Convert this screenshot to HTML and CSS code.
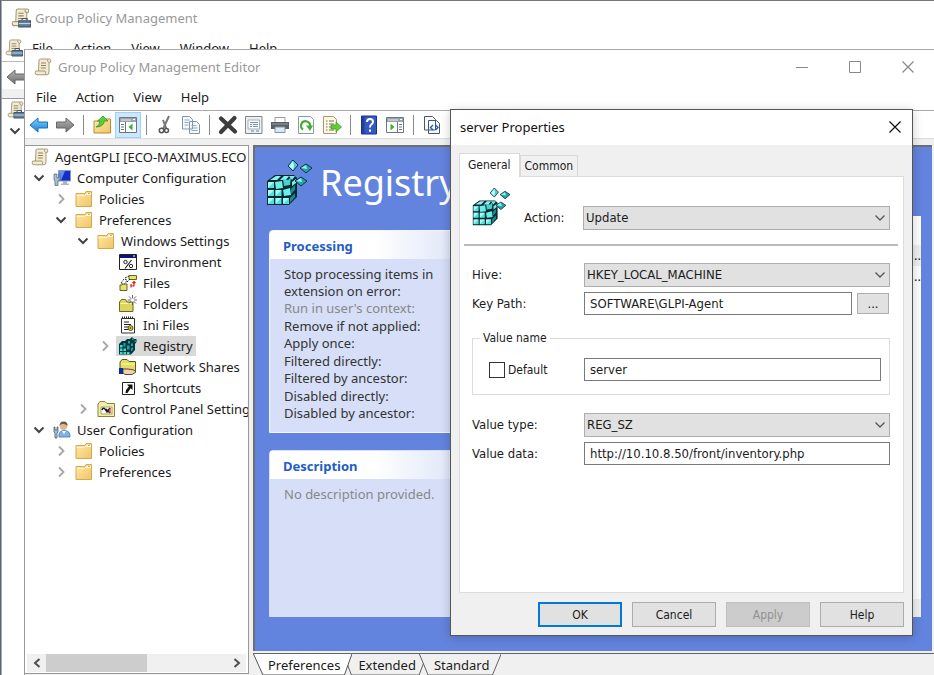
FILE: index.html
```html
<!DOCTYPE html>
<html lang="en">
<head>
<meta charset="utf-8">
<title>Group Policy Management Editor</title>
<link rel="stylesheet" href="styles.css">
</head>
<body>
<svg class="sprite" aria-hidden="true">
  <defs>
    <linearGradient id="g-folder" x1="0" y1="0" x2="1" y2="1"><stop offset="0" stop-color="#ffe9a8"/><stop offset="1" stop-color="#efc567"/></linearGradient>
    <linearGradient id="g-blue" x1="0" y1="0" x2="0" y2="1"><stop offset="0" stop-color="#7fd0fb"/><stop offset="1" stop-color="#1583d8"/></linearGradient>
    <linearGradient id="g-gray" x1="0" y1="0" x2="0" y2="1"><stop offset="0" stop-color="#b5b5b5"/><stop offset="1" stop-color="#6f6f6f"/></linearGradient>
  </defs>
  <symbol id="scroll" viewBox="0 0 18 18">
    <path d="M5 2.200Q5 1 6.500 1H15.500Q17 1 16.800 3T15 4.500V14Q15 16.800 13 16.800H3Q1 16.600 1.200 14.500T3 13H4.500Z" fill="#f3ead0" stroke="#a59a7c"/>
    <path d="M4.500 13H11Q12 14 11.300 16.500M13.500 1.500Q12.800 3.500 15 4.500" fill="none" stroke="#a59a7c"/>
    <path d="M7 5h5M7 7.500h5M6.800 10h5" stroke="#8e856b"/>
  </symbol>
  <symbol id="scroll-tool" viewBox="0 0 18 18">
    <use href="#scroll" width="17" height="17"/>
    <path d="M7 11.500h10.500V17H7z" fill="#5f7f9c" stroke="#43566a"/><path d="M10 11V9.500h4.500V11" fill="none" stroke="#43566a"/><path d="M7 14h10.500" stroke="#c6d3df"/>
  </symbol>
  <symbol id="folder" viewBox="0 0 18 18">
    <path d="M1 3.500h9l1-2h5.500V16.500H1z" fill="url(#g-folder)" stroke="#d6a94b"/>
    <path d="M11.500 3h4.500v2h-4.500z" fill="#fff"/><path d="M1.500 5.500h8l1.500-1.500" fill="none" stroke="#fff2c4"/><path d="M13 3.500l2 0" stroke="#d6a94b"/>
  </symbol>
  <symbol id="computer" viewBox="0 0 18 18">
    <path d="M5.500 1.500h12V12h-12z" fill="#1230c9" stroke="#8c99b5"/><path d="M6 2h6L8 11.500H6z" fill="#5f8df5"/>
    <path d="M10 12h4v2.500h-4zM8 14.500h8v1.500H8z" fill="#aab4c2"/>
    <path d="M1 5h3v4h2V5h1v6l-2 1v4.500H2V12L1 11z" fill="#a9bfd4" stroke="#48607c" stroke-width=".7"/>
  </symbol>
  <symbol id="env" viewBox="0 0 18 18">
    <path d="M.5 1.500h17v15H.5z" fill="#fff" stroke="#222"/><path d="M1 2h16v3H1z" fill="#10107e"/><path d="M14 3h2" stroke="#fff"/>
    <circle cx="6.500" cy="9" r="1.700" fill="none" stroke="#222"/><circle cx="12" cy="13" r="1.700" fill="none" stroke="#222"/><path d="M12.500 7l-6.500 8.500" stroke="#222" stroke-width="1.200"/>
  </symbol>
  <symbol id="files" viewBox="0 0 18 18">
    <path d="M10 1.500h7.500v4H10zM1 11h2l1-1h4v6.500H1z" fill="#e7e26c" stroke="#66622a"/>
    <path d="M2 9l3-4 3 1-2 4z" fill="#fff" stroke="#444" stroke-dasharray="2 1"/><path d="M6 4l4-2M8 8l3-3" stroke="#222" stroke-dasharray="2 1"/>
    <path d="M12 12h3V8M12 10v3.500M13.500 9L15 7.500 16.500 9" fill="none" stroke="#e02020" stroke-width="1.200"/>
  </symbol>
  <symbol id="newfolder" viewBox="0 0 18 18">
    <path d="M.5 7l2-2.500h4L8 7h6v9.500H.5z" fill="#dcd75c" stroke="#6b6720"/><path d="M1.500 8.500h11" stroke="#fffbb0"/>
    <path d="M13.500 0v10M8.500 5h10M10 1.500l7 7M17 1.500l-7 7" stroke="#555" stroke-width=".9"/><circle cx="13.500" cy="5" r="1.700" fill="#fff"/>
  </symbol>
  <symbol id="ini" viewBox="0 0 18 18">
    <path d="M2.500 2.500h13v14.500h-13z" fill="#fff" stroke="#333"/><path d="M3 1.500h12" stroke="#222" stroke-width="2" stroke-dasharray="1 1"/>
    <path d="M5 6h5M5 8.500h7M5 11h4M5 13.500h4" stroke="#222" stroke-width="1.200"/><circle cx="11.500" cy="12" r="2.500" fill="#d6ce37" stroke="#55511a"/>
    <circle cx="11.500" cy="12" r=".8" fill="#333"/>
  </symbol>
  <symbol id="cubes" viewBox="0 0 46 46">
    <path d="M1 21L9 15H28L31 18V37L23 45H1z" fill="#052a30"/>
    <path d="M4 20l6-4h5l-4 4zM14 20l4-4h5l-3 4z" fill="#8ff0ea"/>
    <path d="M2 22h6v6H2zM2 30h6v6H2zM2 38h6v6H2zM9.500 30h6v6h-6zM9.500 38h6v6h-6zM17 38h6v6h-6z" fill="#55dfdc"/>
    <path d="M2 22h6l-6 6zM2 30h6l-6 6zM2 38h6l-6 6zM9.500 30h6l-6 6zM9.500 38h6l-6 6zM17 38h6l-6 6z" fill="#a4faf4"/>
    <path d="M9 22l7-1 1 7-7 1zM17 30l7-2 1 7-7 1z" fill="#6feee8"/><path d="M17 19l5 1 3-3-1 8-6 1z" fill="#4ccfcd"/>
    <path d="M24 38l5-5v4l-5 6zM25 29l4-4v5l-4 4z" fill="#138b90"/><path d="M23 16h6l-3 4zM26 22l4-3v4l-4 3z" fill="#7cece8"/>
    <path d="M27 0l5 5-5 6-5-5z" fill="#53c9cc" stroke="#0a3540"/><path d="M27 1l1 5-1 4-4-4z" fill="#b5fbf6"/>
    <path d="M40 4l6 4-6 5-6-5z" fill="#2aa1a8" stroke="#0a3540"/><path d="M40 5l1 4-6-1z" fill="#8df3ee"/>
    <path d="M35 17l6 4-6 5-6-5z" fill="#2aa1a8" stroke="#0a3540"/><path d="M35 18l1 4-6-1z" fill="#8df3ee"/>
  </symbol>
  <symbol id="cubes-small" viewBox="0 0 18 18">
    <path d="M0 7l3-3h3l2-2h3l2-2 2 2h2.500v3L16 7v6l-4 4.500H0z" fill="#07383d"/>
    <path d="M1 8h2.500v2.500H1zM1 11.500h2.500V14H1zM1 15h2.500v2H1zM4.500 11.500H7V14H4.500zM4.500 15H7v2H4.500zM8 15h2.500v2H8z" fill="#3fd9d5"/>
    <path d="M4.500 6h2v3.500h-2zM8 8.500h2.500v4H8zM9 4h2v2.500H9zM12 6.500h2V9h-2zM13 1.500h1.500V3H13zM15.500 3.500H17V5h-1.500zM12 11.500l2-1.500v2.500l-2 2z" fill="#1ea5a5"/>
  </symbol>
  <symbol id="share" viewBox="0 0 18 18">
    <path d="M1 4l2-2.500h5L10 3.500h6.500V13H1z" fill="#e3de63" stroke="#5e5a1d"/><path d="M2.500 6h13" stroke="#fffbb0"/>
    <path d="M4 11h5l6 1 2 2-4 2.500H6L4 15z" fill="#f2d2ad" stroke="#5b4a36"/><path d="M0 10h4v6H0z" fill="#0b2e9c"/>
  </symbol>
  <symbol id="shortcut" viewBox="0 0 18 18">
    <path d="M3.500 3.500h12v12h-12z" fill="#fff" stroke="#222"/><path d="M8 5.500h5.500V11l-1.900-1.800L8.500 14H6.500q0-3.500 3.400-6.500z" fill="#111"/>
  </symbol>
  <symbol id="cpanel" viewBox="0 0 18 18">
    <path d="M1 4l2-2.500h5L10 3.500h7.500V16.500H1z" fill="#f3edaa" stroke="#8b8236"/><path d="M4 7h11v7H4z" fill="#fff" stroke="#a9a262"/>
    <path d="M5 10q1-3 3-1l2 3 3-4M9 9l4 4" fill="none" stroke="#222" stroke-width="1.500"/><path d="M13 8v5" stroke="#d23" stroke-width="1.200"/>
  </symbol>
  <symbol id="user" viewBox="0 0 18 18">
    <path d="M6 16q-1-6 5-6.500Q17.500 9.500 17 16z" fill="#7fb2e6" stroke="#4474a8" stroke-width=".8"/><path d="M9 10l2 3 2-3z" fill="#fff"/>
    <circle cx="10.500" cy="5.500" r="3.600" fill="#dbb893"/><path d="M6.500 5q0-4.500 4-4.500 4.500 0 4 4.500-2-2.500-5-2-2 0-3 2z" fill="#6b5942"/>
    <path d="M1 6h1v3h2V6h1v5l-1 1v5H2v-5l-1-1z" fill="#a9bfd4" stroke="#48607c" stroke-width=".8"/>
  </symbol>
  <symbol id="down" viewBox="0 0 16 16"><path d="M3.500 5.500L8 10l4.500-4.500" fill="none" stroke="#444" stroke-width="2"/></symbol>
  <symbol id="right" viewBox="0 0 16 16"><path d="M6 3.500L10.500 8 6 12.500" fill="none" stroke="#a6a6a6" stroke-width="1.800"/></symbol>
  <symbol id="arrow" viewBox="0 0 20 16"><path d="M1 8L9 1v4h9.500v6H9v4z" stroke-linejoin="round"/></symbol>
  <symbol id="close" viewBox="0 0 14 14"><path d="M1.500 1.500l11 11M12.500 1.500l-11 11" fill="none" stroke="currentColor" stroke-width="1.200"/></symbol>
  <symbol id="selectarrow" viewBox="0 0 12 8"><path d="M1.500 1.500L6 6l4.500-4.500" fill="none" stroke="#555" stroke-width="1.300"/></symbol>
</svg>

<main class="desktop">
  <section class="window console" aria-label="Group Policy Management">
    <header class="console-title"><svg class="i20"><use href="#scroll-tool"/></svg><span>Group Policy Management</span></header>
    <nav class="console-menu">
      <svg class="i18"><use href="#scroll-tool"/></svg>
      <button>File</button><button>Action</button><button>View</button><button>Window</button><button>Help</button>
    </nav>
    <div class="console-tools"><svg class="nav-arrow gray"><use href="#arrow"/></svg></div>
    <div class="console-tree"><svg class="i18"><use href="#scroll-tool"/></svg><svg class="i16"><use href="#down"/></svg></div>
  </section>

  <section class="window editor" aria-label="Group Policy Management Editor">
    <header class="editor-title">
      <svg class="i18"><use href="#scroll"/></svg><h1>Group Policy Management Editor</h1>
      <div class="controls">
        <button aria-label="Minimize"><svg class="i14" viewBox="0 0 14 14"><path d="M1 7.500h12" stroke="#888"/></svg></button>
        <button aria-label="Maximize"><svg class="i14" viewBox="0 0 14 14"><path d="M1.500 1.500h11v11h-11z" fill="none" stroke="#888"/></svg></button>
        <button aria-label="Close"><svg class="i14"><use href="#close"/></svg></button>
      </div>
    </header>
    <nav class="menu"><button>File</button><button>Action</button><button>View</button><button>Help</button></nav>
    <div class="toolbar">
      <button aria-label="Back"><svg class="nav-arrow blue"><use href="#arrow"/></svg></button>
      <button aria-label="Forward"><svg class="nav-arrow gray forward"><use href="#arrow"/></svg></button>
      <i></i>
      <button aria-label="Up"><svg class="i20" viewBox="0 0 20 20"><path d="M2 6h8l2-2h6.500v14H2z" fill="url(#g-folder)" stroke="#b98b2c"/><path d="M4 12q4-2 4-6H5.500L11 1l5 5h-3.500q-1 6-8.500 6z" fill="#5dcc3a" stroke="#2a8a1b" stroke-width=".7"/></svg></button>
      <button class="on" aria-label="Show tree"><svg class="i20" viewBox="0 0 20 20"><path d="M1.500 2.500h17v15h-17z" fill="#fff" stroke="#6c7680"/><path d="M2 3h16v4H2z" fill="#9aa4ae"/><path d="M3 5h10" stroke="#e7ecf0"/><path d="M15 4.500h2" stroke="#fff"/><path d="M7.500 7v10M3 9.500h3M3 12h3M3 14.500h3" stroke="#6c7680"/><path d="M14.500 8.500v7L10.500 12z" fill="#3db02d"/></svg></button>
      <i></i>
      <button aria-label="Cut"><svg class="i20" viewBox="0 0 20 20"><path d="M14 1L8 14M8 5l3.500 9" stroke="#777" stroke-width="2"/><circle cx="6.500" cy="15.500" r="2.200" fill="none" stroke="#555" stroke-width="1.500"/><circle cx="11.500" cy="15.500" r="2" fill="none" stroke="#555" stroke-width="1.500"/></svg></button>
      <button aria-label="Copy"><svg class="i20" viewBox="0 0 20 20"><path d="M1.500 1.500h7l3 3v9.500h-10zM8.500 6.500h7l3 3v9h-10z" fill="#f6f9fc" stroke="#8095a8"/><path d="M3.500 5h5M3.500 7.500h4M3.500 10h4M10.500 10.500h5M10.500 13h6M10.500 15.500h6" stroke="#8aa9c6"/></svg></button>
      <i></i>
      <button aria-label="Delete"><svg class="i20" viewBox="0 0 20 20"><path d="M3 3.500l14 13M16.500 3L3 17" stroke="#3d3d3d" stroke-width="4.200" stroke-linecap="round"/></svg></button>
      <button aria-label="Properties"><svg class="i20" viewBox="0 0 20 20"><path d="M1.500 1.500h16.500v17H1.500z" fill="#eceff2" stroke="#7d8790"/><path d="M4 5h11.500v9H4z" fill="#fff" stroke="#a3adb6"/><path d="M6 7.500h8M6 9.500h2M9 9.500h5M6 11.500h2M9 11.500h5" stroke="#7690a8"/><path d="M7 16h3M12 16h3" stroke="#98a5b0" stroke-width="1.500"/></svg></button>
      <button aria-label="Print"><svg class="i20" viewBox="0 0 20 20"><path d="M5 2.500h10V8H5z" fill="#fff" stroke="#999"/><path d="M1 7h18v7H1z" fill="#5a5f64"/><path d="M2 9h16" stroke="#9aa0a5"/><path d="M5 12h10v5.500H5z" fill="#d4e8f8" stroke="#7f95a8"/></svg></button>
      <button aria-label="Refresh"><svg class="i20" viewBox="0 0 20 20"><path d="M2.500 1.500h12l3 3v14h-15z" fill="#fff" stroke="#8e9aa5"/><path d="M7 14.500a4.500 4.500 0 1 1 7-3" fill="none" stroke="#42ad35" stroke-width="2.200"/><path d="M17 10.500l-3 5.500-4-5.500z" fill="#42ad35"/></svg></button>
      <button aria-label="Export"><svg class="i20" viewBox="0 0 20 20"><path d="M1.500 1.500h10l3 3v14h-13z" fill="#fdf8e3" stroke="#a89b6f"/><path d="M4 6h1.500M7 6h5M4 9h1.500M7 9h5M4 12h1.500M7 12h3M4 15h1.500M7 15h5" stroke="#7a745c"/><path d="M9 10h5V7l5.500 5-5.500 5v-3H9z" fill="#66cc33" stroke="#379c1c" stroke-width=".7"/></svg></button>
      <i></i>
      <button aria-label="Help"><svg class="i20" viewBox="0 0 20 20"><path d="M2.500 1h15v18h-15z" fill="#3457c4" stroke="#1b3283"/><path d="M3 1.500h2.500v17H3z" fill="#203f9e"/><path d="M8 7q0-3 3-3t3 2.800q0 1.700-1.800 2.700-1.200.8-1.200 3M11 14.500v2.200" fill="none" stroke="#fff" stroke-width="2"/></svg></button>
      <button aria-label="Show actions"><svg class="i20" viewBox="0 0 20 20"><path d="M1.500 2.500h17v15h-17z" fill="#fff" stroke="#6c7680"/><path d="M2 3h16v4H2z" fill="#9aa4ae"/><path d="M3 5h10" stroke="#e7ecf0"/><path d="M15 4.500h2" stroke="#fff"/><path d="M12.500 7v10M14 9.500h3M14 12h3M14 14.500h3" stroke="#6c7680"/><path d="M5.500 8.500v7l4-3.500z" fill="#3db02d"/></svg></button>
      <i></i>
      <button aria-label="Edit source"><svg class="i20" viewBox="0 0 20 20"><path d="M2.500 1.500h8l3 3V15h-11zM6.500 5.500h8l3 3v10h-11z" fill="#f8fafc" stroke="#47586a"/><path d="M11 10l-2.500 2.500L11 15M13.500 10l2.500 2.500-2.500 2.500" fill="none" stroke="#2458c0" stroke-width="1.400"/></svg></button>
    </div>

    <div class="workspace">
      <aside class="tree-pane">
        <ul class="tree">
          <li><div class="node root"><svg class="i18"><use href="#scroll"/></svg><span>AgentGPLI [ECO-MAXIMUS.ECO</span></div></li>
          <li><div class="node"><svg class="i16"><use href="#down"/></svg><svg class="i18"><use href="#computer"/></svg><span>Computer Configuration</span></div>
            <ul>
              <li><div class="node"><svg class="i16"><use href="#right"/></svg><svg class="i18"><use href="#folder"/></svg><span>Policies</span></div></li>
              <li><div class="node"><svg class="i16"><use href="#down"/></svg><svg class="i18"><use href="#folder"/></svg><span>Preferences</span></div>
                <ul>
                  <li><div class="node"><svg class="i16"><use href="#down"/></svg><svg class="i18"><use href="#folder"/></svg><span>Windows Settings</span></div>
                    <ul>
                      <li><div class="node leaf"><svg class="i18"><use href="#env"/></svg><span>Environment</span></div></li>
                      <li><div class="node leaf"><svg class="i18"><use href="#files"/></svg><span>Files</span></div></li>
                      <li><div class="node leaf"><svg class="i18"><use href="#newfolder"/></svg><span>Folders</span></div></li>
                      <li><div class="node leaf"><svg class="i18"><use href="#ini"/></svg><span>Ini Files</span></div></li>
                      <li><div class="node"><svg class="i16"><use href="#right"/></svg><div class="selected"><svg class="i18"><use href="#cubes-small"/></svg><span>Registry</span></div></div></li>
                      <li><div class="node leaf"><svg class="i18"><use href="#share"/></svg><span>Network Shares</span></div></li>
                      <li><div class="node leaf"><svg class="i18"><use href="#shortcut"/></svg><span>Shortcuts</span></div></li>
                    </ul>
                  </li>
                  <li><div class="node"><svg class="i16"><use href="#right"/></svg><svg class="i18"><use href="#cpanel"/></svg><span>Control Panel Settings</span></div></li>
                </ul>
              </li>
            </ul>
          </li>
          <li><div class="node"><svg class="i16"><use href="#down"/></svg><svg class="i18"><use href="#user"/></svg><span>User Configuration</span></div>
            <ul>
              <li><div class="node"><svg class="i16"><use href="#right"/></svg><svg class="i18"><use href="#folder"/></svg><span>Policies</span></div></li>
              <li><div class="node"><svg class="i16"><use href="#right"/></svg><svg class="i18"><use href="#folder"/></svg><span>Preferences</span></div></li>
            </ul>
          </li>
        </ul>
        <div class="scrollbar">
          <button aria-label="Scroll left"><svg class="i10" viewBox="0 0 10 10"><path d="M7.500 1L3 5l4.500 4" fill="none" stroke="#505050" stroke-width="2"/></svg></button>
          <div class="track"><div class="thumb"></div></div>
          <button aria-label="Scroll right"><svg class="i10" viewBox="0 0 10 10"><path d="M2.500 1L7 5 2.500 9" fill="none" stroke="#505050" stroke-width="2"/></svg></button>
        </div>
      </aside>

      <div class="details">
        <div class="page">
          <div class="summary">
            <div class="heading"><svg><use href="#cubes"/></svg><h2>Registry</h2></div>
            <section class="card"><h3>Processing</h3>
              <ul><li>Stop processing items in extension on error:</li><li class="muted">Run in user's context:</li><li>Remove if not applied:</li><li>Apply once:</li><li>Filtered directly:</li><li>Filtered by ancestor:</li><li>Disabled directly:</li><li>Disabled by ancestor:</li></ul>
            </section>
            <section class="card grow"><h3>Description</h3><p class="muted">No description provided.</p></section>
          </div>
          <div class="items"><div class="items-head"></div><div class="items-row alt">..</div><div class="items-row">..</div><div class="items-foot"></div></div>
        </div>
        <div class="sheets">
          <button class="sheet active"><svg viewBox="0 0 100 21" preserveAspectRatio="none"><path d="M.5 0L10 21H92L99.500 0" fill="#fff" stroke="#555"/></svg><span>Preferences</span></button>
          <button class="sheet"><svg viewBox="0 0 100 21" preserveAspectRatio="none"><path d="M.5 0L10 21H90L99.500 0" fill="#f0f0f0" stroke="#555"/></svg><span>Extended</span></button>
          <button class="sheet"><svg viewBox="0 0 100 21" preserveAspectRatio="none"><path d="M.5 0L11 21H89L99.500 0" fill="#f0f0f0" stroke="#555"/></svg><span>Standard</span></button>
        </div>
      </div>
    </div>
  </section>

  <section class="dialog" role="dialog" aria-labelledby="dlg-title">
    <header class="dialog-title"><h2 id="dlg-title">server Properties</h2><button aria-label="Close"><svg class="i14"><use href="#close"/></svg></button></header>
    <form class="dialog-body">
      <div class="tabs"><button type="button" class="tab current">General</button><button type="button" class="tab">Common</button></div>
      <div class="panel">
        <div class="row action">
          <svg class="cube"><use href="#cubes"/></svg><label for="action">Action:</label>
          <div class="select"><select id="action"><option>Update</option></select><svg><use href="#selectarrow"/></svg></div>
        </div>
        <hr>
        <div class="row"><label for="hive">Hive:</label>
          <div class="select"><select id="hive"><option>HKEY_LOCAL_MACHINE</option></select><svg><use href="#selectarrow"/></svg></div></div>
        <div class="row"><label for="path">Key Path:</label>
          <div class="with-button"><input id="path" type="text" value="SOFTWARE\GLPI-Agent"><button type="button" class="browse" aria-label="Browse">...</button></div></div>
        <fieldset><legend>Value name</legend>
          <div class="name-row"><label class="check"><input type="checkbox">Default</label><input type="text" aria-label="Value name" value="server"></div>
        </fieldset>
        <div class="row"><label for="type">Value type:</label>
          <div class="select"><select id="type"><option>REG_SZ</option></select><svg><use href="#selectarrow"/></svg></div></div>
        <div class="row"><label for="data">Value data:</label><input id="data" type="text" value="http://10.10.8.50/front/inventory.php"></div>
      </div>
      <div class="actions"><button type="button" class="primary">OK</button><button type="button">Cancel</button><button type="button" disabled>Apply</button><button type="button">Help</button></div>
    </form>
  </section>
</main>
</body>
</html>
```
FILE: styles.css
```css
* { box-sizing: border-box; }
html, body { height: 100%; }
body {
  margin: 0;
  overflow: hidden;
  font: 13px/20px "Noto Sans", "Open Sans", sans-serif;
  color: #1b1b1b;
}
button, input, select { font: inherit; color: inherit; margin: 0; }
button { padding: 0; border: 0; background: none; }
h1, h2, h3, p, ul { margin: 0; padding: 0; font: inherit; list-style: none; }
svg { display: block; flex: none; }
.sprite { position: absolute; width: 0; height: 0; }

.i10 { width: 10px; height: 10px; }
.i14 { width: 14px; height: 14px; }
.i16 { width: 16px; height: 16px; }
.i18 { width: 18px; height: 18px; }
.i20 { width: 20px; height: 20px; }
.nav-arrow { width: 20px; height: 16px; }
.forward { transform: scaleX(-1); }
.blue { fill: url(#g-blue); stroke: #1b6fb5; }
.gray { fill: url(#g-gray); stroke: #666; }

.desktop { position: relative; height: 100%; overflow: hidden; background: #5a6478; }
.window { position: absolute; right: 0; bottom: 0; background: #fff; }

/* Console window at the back */
.console { left: 1px; top: 0; border-top: 1px solid #777; border-left: 1px solid #aaa; }
.console-title { display: flex; align-items: center; gap: 4px; height: 33px; padding-left: 9px; color: #999; }
.console-menu { display: flex; align-items: center; gap: 20px; height: 28px; padding-left: 3px; border-bottom: 1px solid #bbb; }
.console-menu svg { margin-right: -11px; }
.console-tools { height: 36px; padding: 7px 4px; border-bottom: 9px solid #f0f0f0; }
.console-tree { display: flex; flex-direction: column; gap: 4px; padding: 2px 5px; border-top: 1px solid #999; }

/* Editor window */
.editor {
  left: 24px;
  top: 49px;
  display: flex;
  flex-direction: column;
  border-top: 1px solid #aaa;
  border-left: 1px solid #999;
}
.editor-title { display: flex; align-items: center; gap: 6px; height: 33px; padding-left: 9px; color: #999; }
.controls { display: flex; gap: 39px; margin-left: auto; padding-right: 19px; }
.menu { display: flex; gap: 19px; height: 28px; padding-left: 11px; border-bottom: 1px solid #aaa; }
.menu button { height: 27px; }
.toolbar { display: flex; align-items: center; height: 28px; padding-left: 1px; border-bottom: 1px solid #ddd; }
.toolbar button { display: grid; place-items: center; width: 26px; height: 26px; }
.toolbar .on { background: #cce8ff; border: 1px solid #99d1ff; }
.toolbar i { width: 1px; height: 20px; margin: 0 5px; background: #8a8a8a; }

.workspace { display: flex; flex: 1; min-height: 0; padding-top: 6px; background: #f0f0f0; }
.tree-pane {
  display: flex;
  flex-direction: column;
  width: 224px;
  margin-bottom: 1px;
  border: 1px solid #999;
  border-left: 0;
  background: #fff;
}
.tree { flex: 1; overflow: hidden; padding: 0 2px 0 6px; }
.tree ul { padding-left: 22px; }
.node { display: flex; align-items: center; gap: 6px; height: 21px; white-space: nowrap; }
.leaf { padding-left: 22px; }
.selected { display: flex; align-items: center; gap: 6px; height: 20px; margin-left: -3px; padding: 0 3px; background: #d9d9d9; }
.scrollbar { display: flex; height: 18px; margin: 0 2px 1px; background: #f0f0f0; }
.scrollbar button { display: grid; place-items: center; width: 19px; }
.track { flex: 1; }
.thumb { width: 56%; height: 100%; background: #cdcdcd; }

.details { display: flex; flex: 1; flex-direction: column; min-width: 0; margin-left: 4px; }
.page {
  display: flex;
  flex: 1;
  min-height: 0;
  margin-right: 2px;
  padding: 0 11px 34px 14px;
  border: 2px solid #6e6e6e;
  border-width: 2px 0 0 2px;
  background: #6384de;
}
.summary { display: flex; flex-direction: column; width: 210px; }
.heading { display: flex; align-items: center; gap: 8px; height: 71px; margin: 0 0 12px -3px; color: #fff; }
.heading svg { width: 46px; height: 46px; }
.heading h2 { font-size: 36px; line-height: 48px; }
.card { display: flex; flex-direction: column; height: 203px; margin-bottom: 17px; border: 1px solid #f3f6ff; border-radius: 4px 4px 0 0; background: #d6dff7; }
.card h3 { height: 28px; padding-left: 13px; font-weight: 700; line-height: 30px; color: #215dc6; background: linear-gradient(to right, #fff 50%, #d6dff7); }
.card ul { display: flex; flex: 1; flex-direction: column; justify-content: space-between; padding: 7px 12px 10px 14px; line-height: 17px; color: #333; }
.card p { padding: 5px 14px; }
.card .muted { color: #888; }
.grow { flex: 1; height: auto; margin: 0; border-color: #d6dff7; }
.items { display: flex; flex: 1; flex-direction: column; margin-top: 69px; background: #fff; text-align: right; }
.items-head { height: 29px; }
.items-row { height: 21px; line-height: 21px; }
.alt { background: #f0f0f0; }
.items-foot { height: 18px; margin-top: auto; background: #f0f0f0; }

.sheets { display: flex; height: 22px; margin-top: 2px; border-top: 1px solid #666; }
.sheet { position: relative; height: 21px; padding: 0 12px 0 15px; }
.sheet + .sheet { margin-left: -9px; }
.sheet svg { position: absolute; inset: 0; width: 100%; height: 100%; }
.sheet span { position: relative; }
.sheet.active { z-index: 1; }

/* Properties dialog */
.dialog {
  position: absolute;
  left: 450px;
  top: 109px;
  right: 21px;
  bottom: 39px;
  display: flex;
  flex-direction: column;
  border: 1px solid #555;
  background: #f0f0f0;
  box-shadow: 0 2px 10px rgba(0, 0, 0, .2);
}
.dialog-title { display: flex; align-items: center; justify-content: space-between; height: 35px; padding: 0 10px 2px 9px; background: #fff; color: #111; }
.controls svg { color: #888; }
.dialog-body { display: flex; flex: 1; flex-direction: column; min-height: 0; padding: 8px 8px; font: 13px/16px "DejaVu Sans Condensed", "DejaVu Sans", sans-serif; }
.tabs { display: flex; align-items: flex-end; height: 23px; font-size: 12px; }
.tab { height: 21px; padding: 0 4px; border: 1px solid #d9d9d9; border-bottom: 0; }
.current { z-index: 1; height: 24px; margin-bottom: -1px; padding: 0 8px 2px; background: #fff; }
.panel { flex: 1; padding: 11px 13px 0 12px; border: 1px solid #dcdcdc; background: #fff; }
.row { display: grid; grid-template-columns: 112px 1fr; align-items: center; margin-bottom: 5px; }
.row.action { grid-template-columns: 38px 45px 1fr; column-gap: 14px; align-items: end; height: 42px; margin: 0; }
.action label { margin-bottom: 4px; }
.action .cube { align-self: start; }
.cube { width: 38px; height: 38px; }
hr { height: 2px; margin: 14px -8px 17px; border: 0; background: #bbb; }
.select { position: relative; }
select { display: block; width: 100%; height: 24px; padding: 0 2px; border: 1px solid #adadad; border-radius: 0; appearance: none; background: #e1e1e1; }
.select svg { position: absolute; right: 4px; top: 8px; width: 12px; height: 8px; pointer-events: none; }
input[type="text"] { width: 100%; min-width: 0; height: 23px; padding: 0 5px; border: 1px solid #7a7a7a; border-radius: 0; background: #fff; }
.with-button { display: flex; align-items: center; gap: 5px; padding-right: 1px; }
.browse { flex: none; width: 32px; height: 21px; border: 1px solid #adadad; background: #e1e1e1; }
fieldset { min-width: 0; margin: 15px 0 18px; padding: 12px 8px 13px 16px; border: 1px solid #dcdcdc; }
legend { margin-left: -9px; padding: 0 3px; font-size: 12px; }
.name-row { display: grid; grid-template-columns: 95px 1fr; align-items: center; }
.check { display: flex; align-items: center; gap: 3px; font-size: 12px; }
.check input { width: 16px; height: 16px; border: 1px solid #333; appearance: none; background: #fff; }
.actions { display: flex; justify-content: flex-end; gap: 10px; padding-top: 9px; font-size: 12px; }
.actions button { width: 84px; height: 25px; border: 1px solid #adadad; background: #e1e1e1; }
.actions .primary { border: 2px solid #0078d7; }
.actions button:disabled { border-color: #bfbfbf; background: #ccc; color: #909090; }
```
